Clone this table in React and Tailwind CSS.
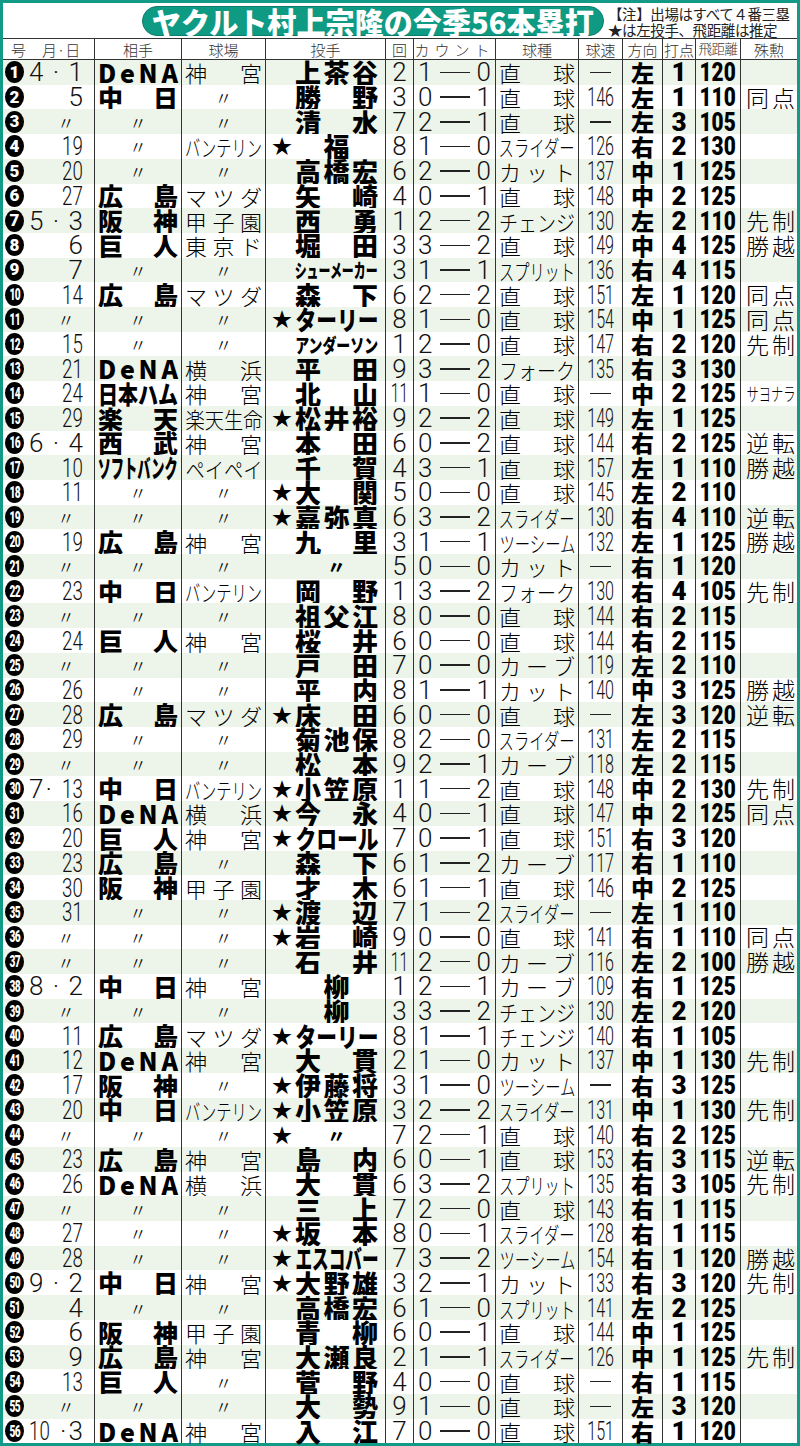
import React, { useLayoutEffect, useRef, useState } from 'react'

const jp = "font-['Noto_Sans_CJK_JP','Noto_Sans_CJK_SC',sans-serif]"
const num = "font-['Roboto','Liberation_Sans',sans-serif]"

const W = [
  'w-[92px]', 'w-[87px]', 'w-[84px]', 'w-[120px]', 'w-[28px]', 'w-[82px]',
  'w-[83px]', 'w-[44px]', 'w-[40px]', 'w-[33px]', 'w-[45px]', 'w-[56px]',
]

// date|team|park|star|pitcher|inning|count|pitch|speed|dir|rbi|dist|note
const data = [
  '4·1|DeNA|神宮||上茶谷|2|1-0|直球|—|左|1|120|',
  '5|中日|〃||勝野|3|0-1|直球|146|左|1|110|同点',
  '〃|〃|〃||清水|7|2-1|直球|—|左|3|105|',
  '19|〃|バンテリン|★|福|8|1-0|スライダー|126|右|2|130|',
  '20|〃|〃||高橋宏|6|2-0|カット|137|中|1|125|',
  '27|広島|マツダ||矢崎|4|0-1|直球|148|中|2|125|',
  '5·3|阪神|甲子園||西勇|1|2-2|チェンジ|130|左|2|110|先制',
  '6|巨人|東京ド||堀田|3|3-2|直球|149|中|4|125|勝越',
  '7|〃|〃||シューメーカー|3|1-1|スプリット|136|右|4|115|',
  '14|広島|マツダ||森下|6|2-2|直球|151|左|1|120|同点',
  '〃|〃|〃|★|ターリー|8|1-0|直球|154|中|1|125|同点',
  '15|〃|〃||アンダーソン|1|2-0|直球|147|右|2|120|先制',
  '21|DeNA|横浜||平田|9|3-2|フォーク|135|右|3|130|',
  '24|日本ハム|神宮||北山|11|1-0|直球|—|中|2|125|サヨナラ',
  '29|楽天|楽天生命|★|松井裕|9|2-2|直球|149|左|1|125|',
  '6·4|西武|神宮||本田|6|0-2|直球|144|右|2|125|逆転',
  '10|ソフトバンク|ペイペイ||千賀|4|3-1|直球|157|左|1|110|勝越',
  '11|〃|〃|★|大関|5|0-0|直球|145|左|2|110|',
  '〃|〃|〃|★|嘉弥真|6|3-2|スライダー|130|右|4|110|逆転',
  '19|広島|神宮||九里|3|1-1|ツーシーム|132|左|1|125|勝越',
  '〃|〃|〃||〃|5|0-0|カット|—|右|1|120|',
  '23|中日|バンテリン||岡野|1|3-2|フォーク|130|右|4|105|先制',
  '〃|〃|〃||祖父江|8|0-0|直球|144|右|2|115|',
  '24|巨人|神宮||桜井|6|0-0|直球|144|右|2|115|',
  '〃|〃|〃||戸田|7|0-0|カーブ|119|左|2|110|',
  '26|〃|〃||平内|8|1-1|カット|140|中|3|125|勝越',
  '28|広島|マツダ|★|床田|6|0-0|直球|—|左|3|120|逆転',
  '29|〃|〃||菊池保|8|2-0|スライダー|131|左|2|115|',
  '〃|〃|〃||松本|9|2-1|カーブ|118|左|2|115|',
  '7·13|中日|バンテリン|★|小笠原|1|1-2|直球|148|中|2|130|先制',
  '16|DeNA|横浜|★|今永|4|0-1|直球|147|中|2|125|同点',
  '20|巨人|神宮|★|クロール|7|0-1|直球|151|右|3|120|',
  '23|広島|〃||森下|6|1-2|カーブ|117|右|1|110|',
  '30|阪神|甲子園||才木|6|1-1|直球|146|中|2|125|',
  '31|〃|〃|★|渡辺|7|1-2|スライダー|—|左|1|110|',
  '〃|〃|〃|★|岩崎|9|0-0|直球|141|右|1|110|同点',
  '〃|〃|〃||石井|11|2-0|カーブ|116|左|2|100|勝越',
  '8·2|中日|神宮||柳|1|2-1|カーブ|109|右|1|125|',
  '〃|〃|〃||柳|3|3-2|チェンジ|130|左|2|120|',
  '11|広島|マツダ|★|ターリー|8|1-1|チェンジ|140|右|1|105|',
  '12|DeNA|神宮||大貫|2|1-0|カット|137|中|1|130|先制',
  '17|阪神|〃|★|伊藤将|3|1-0|ツーシーム|—|右|3|125|',
  '20|中日|バンテリン|★|小笠原|3|2-2|スライダー|131|中|1|130|先制',
  '〃|〃|〃|★|〃|7|2-1|直球|140|右|2|125|',
  '23|広島|神宮||島内|6|0-1|直球|153|右|3|115|逆転',
  '26|DeNA|横浜||大貫|6|3-2|スプリット|135|右|3|105|先制',
  '〃|〃|〃||三上|7|2-0|直球|143|右|1|115|',
  '27|〃|〃|★|坂本|8|0-1|スライダー|128|右|1|115|',
  '28|〃|〃|★|エスコバー|7|3-2|ツーシーム|154|右|1|120|勝越',
  '9·2|中日|神宮|★|大野雄|3|2-1|カット|133|右|3|120|先制',
  '4|〃|〃||高橋宏|6|1-0|スプリット|141|左|2|125|',
  '6|阪神|甲子園||青柳|6|0-1|直球|144|中|1|125|',
  '9|広島|神宮||大瀬良|2|1-1|スライダー|126|中|1|125|先制',
  '13|巨人|〃||菅野|4|0-0|直球|—|右|1|115|',
  '〃|〃|〃||大勢|9|1-0|直球|—|左|3|120|',
  '10·3|DeNA|神宮||入江|7|0-0|直球|151|右|1|120|',
]

// squeezes text into the box; short words get spread out like the paper does
function Fit({ text, spread = false, className = '' }) {
  const box = useRef(null)
  const inner = useRef(null)
  const [scale, setScale] = useState(null)

  useLayoutEffect(() => {
    const avail = box.current.clientWidth
    const natural = inner.current.getBoundingClientRect().width
    setScale(natural > avail ? avail / natural : 1)
  }, [text])

  const chars = Array.from(text)
  if (scale === 1 && spread && chars.length > 1) {
    return (
      <div ref={box} className={`flex-1 min-w-0 flex justify-between items-center ${className}`}>
        {chars.map((c, i) => <span key={i}>{c}</span>)}
      </div>
    )
  }
  return (
    <div ref={box} className={`flex-1 min-w-0 flex justify-center items-center overflow-visible ${className}`}>
      <span
        ref={inner}
        className="shrink-0 whitespace-nowrap"
        style={scale && scale < 1 ? { transform: `scaleX(${scale})` } : undefined}
      >
        {text}
      </span>
    </div>
  )
}

function Ditto({ bold }) {
  return (
    <div className="flex-1 flex justify-center items-center">
      <span className={`${jp} ${bold ? 'font-black' : 'font-light'} text-[18px] leading-none`}>〃</span>
    </div>
  )
}

function Badge({ n }) {
  return (
    <span className="shrink-0 ml-[2px] w-[19px] h-[22px] rounded-[50%] bg-black text-white flex items-center justify-center">
      <span className={`inline-block ${num} font-black text-[17px] leading-none ${n > 9 ? 'scale-x-[0.6] tracking-[-1px]' : ''}`}>
        {n}
      </span>
    </span>
  )
}

const thinNum = `${num} font-light text-[26px] leading-[20px] text-[#111]`

function DateCell({ date }) {
  if (date === '〃') {
    return (
      <div className="flex-1 flex justify-end pr-[8px]">
        <span className={`${jp} font-light text-[18px] leading-none`}>〃</span>
      </div>
    )
  }
  if (date.includes('·')) {
    const [m, d] = date.split('·')
    return (
      <div className="flex-1 flex justify-between items-center pl-[5px]">
        <span className={`inline-block ${thinNum} ${m.length > 1 ? 'scale-x-[0.72] origin-left' : ''}`}>{m}</span>
        <span className={thinNum}>·</span>
        <span className={`inline-block ${thinNum} ${d.length > 1 ? 'scale-x-[0.72] origin-right' : ''}`}>{d}</span>
      </div>
    )
  }
  return (
    <div className="flex-1 flex justify-end items-center">
      <span className={`inline-block ${thinNum} ${date.length > 1 ? 'scale-x-[0.72] origin-right' : ''}`}>{date}</span>
    </div>
  )
}

function Row({ line, i }) {
  const [date, team, park, star, name, inn, count, pitch, speed, dir, rbi, dist, note] = line.split('|')
  const [c1, c2] = count.split('-')
  const cell = 'shrink-0 h-full flex items-center border-r border-[#333]'
  const bg = i % 2 === 0 ? 'bg-[#edf5ea]' : 'bg-white'
  const nameSize = Array.from(name).length >= 6 ? 'text-[19px]' : 'text-[26px]'

  return (
    <div className={`flex-1 min-h-0 flex ${bg}`}>
      <div className={`${W[0]} ${cell} pr-[11px]`}>
        <Badge n={i + 1} />
        <DateCell date={date} />
      </div>
      <div className={`${W[1]} ${cell} px-[3px]`}>
        {team === '〃' ? <Ditto /> : <Fit text={team} spread className={`${jp} font-black text-[25px] leading-none`} />}
      </div>
      <div className={`${W[2]} ${cell} px-[3px]`}>
        {park === '〃' ? <Ditto /> : <Fit text={park} spread className={`${jp} font-light text-[22px] leading-none`} />}
      </div>
      <div className={`${W[3]} ${cell} pl-[6px] pr-[7px]`}>
        <span className={`w-[20px] shrink-0 ${jp} text-[20px] leading-none`}>{star}</span>
        <div className="flex-1 min-w-0 ml-[3px] h-full flex items-center">
          {name === '〃'
            ? <Ditto bold />
            : <Fit text={name} spread className={`${jp} font-black ${nameSize} leading-none`} />}
        </div>
      </div>
      <div className={`${W[4]} ${cell} justify-center`}>
        <span className={`inline-block ${thinNum} ${inn.length > 1 ? 'scale-x-[0.6]' : ''}`}>{inn}</span>
      </div>
      <div className={`${W[5]} ${cell} justify-between px-[4px]`}>
        <span className={thinNum}>{c1}</span>
        <span className="w-[30px] h-[1.5px] bg-[#222]" />
        <span className={thinNum}>{c2}</span>
      </div>
      <div className={`${W[6]} ${cell} px-[3px]`}>
        <Fit text={pitch} spread className={`${jp} font-light text-[22px] leading-none`} />
      </div>
      <div className={`${W[7]} ${cell} justify-center`}>
        {speed === '—'
          ? <span className="w-[21px] h-[1.5px] bg-[#222]" />
          : <span className={`inline-block ${thinNum} scale-x-[0.62]`}>{speed}</span>}
      </div>
      <div className={`${W[8]} ${cell} justify-center`}>
        <span className={`${jp} font-black text-[23px] leading-none`}>{dir}</span>
      </div>
      <div className={`${W[9]} ${cell} justify-center`}>
        <span className={`${num} font-black text-[26px] leading-[20px]`}>{rbi}</span>
      </div>
      <div className={`${W[10]} ${cell} justify-center`}>
        <span className={`inline-block ${num} font-black text-[26px] leading-[20px] scale-x-[0.8]`}>{dist}</span>
      </div>
      <div className={`${W[11]} shrink-0 h-full flex items-center pl-[5px] pr-[2px]`}>
        {note && (
          <Fit
            text={note}
            spread
            className={`${jp} font-light ${note.length > 3 ? 'text-[18px]' : 'text-[23px]'} leading-none`}
          />
        )}
      </div>
    </div>
  )
}

const heads = ['相手', '球場', '投手', '回', 'カウント', '球種', '球速', '方向', '打点', '飛距離', '殊勲']

export default function App() {
  return (
    <div className="w-[800px] h-[1446px] bg-white border-[3px] border-[#139a86] flex flex-col text-black">
      {/* title */}
      <div className="h-[35px] shrink-0 flex items-start pt-[3px]">
        <div className="ml-[139px] w-[462px] h-[30px] shrink-0 rounded-full bg-[#0f9a84] border border-[#0b7c6a] flex items-center px-[9px] text-white">
          <Fit text="ヤクルト村上宗隆の今季56本塁打" className={`${jp} font-black text-[30px] leading-none`} />
        </div>
        <div className={`ml-[4px] ${jp} text-[14.5px] leading-[16px] text-[#222] whitespace-nowrap tracking-[-0.4px]`}>
          <div>【注】出場はすべて４番三塁</div>
          <div>★は左投手、飛距離は推定</div>
        </div>
      </div>

      {/* header */}
      <div className={`h-[22px] shrink-0 flex border-y border-[#333] ${jp} font-light text-[15px] leading-none text-[#333]`}>
        <div className={`${W[0]} shrink-0 h-full flex items-center gap-[16px] pl-[8px] border-r border-[#333]`}>
          <span>号</span>
          <span>月·日</span>
        </div>
        {heads.map((h, k) => (
          <div
            key={h}
            className={`${W[k + 1]} shrink-0 h-full flex items-center justify-center whitespace-nowrap ${k < 10 ? 'border-r border-[#333]' : ''} ${h === 'カウント' ? 'tracking-[5px]' : ''} ${h === '飛距離' ? 'text-[13.5px] tracking-[-0.5px]' : ''}`}
          >
            {h}
          </div>
        ))}
      </div>

      {/* rows */}
      <div className="flex-1 min-h-0 flex flex-col">
        {data.map((line, i) => <Row key={i} line={line} i={i} />)}
      </div>
    </div>
  )
}
